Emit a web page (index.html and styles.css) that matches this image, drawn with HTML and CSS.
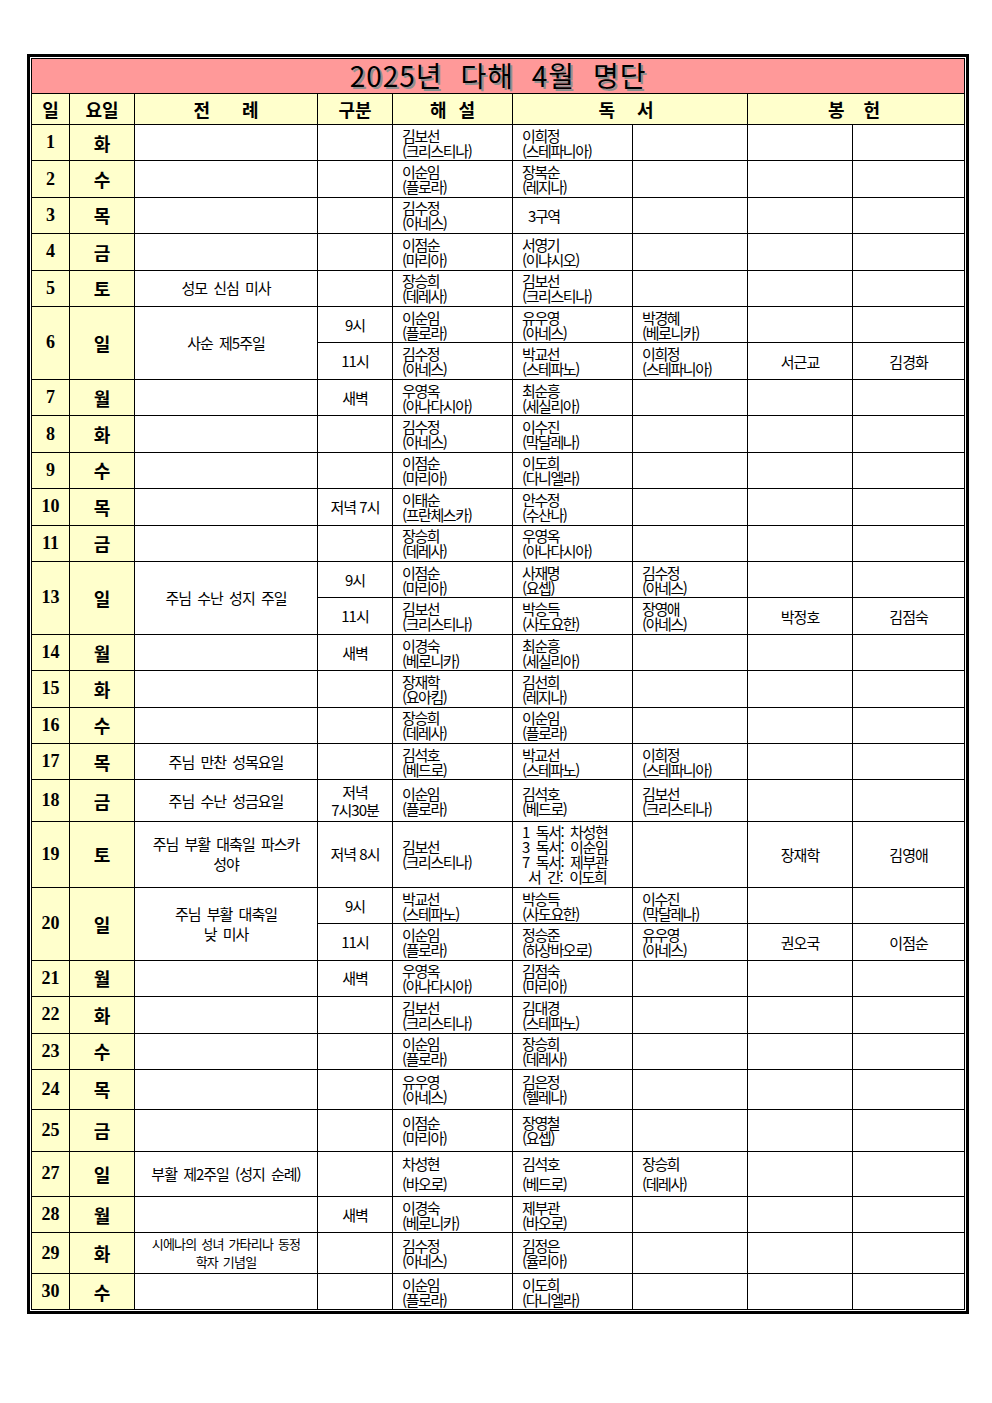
FILE: index.html
```html
<!DOCTYPE html>
<html lang="ko">
<head>
<meta charset="utf-8">
<title>2025년 다해 4월 명단</title>
<link rel="stylesheet" href="styles.css">
</head>
<body>
<div class="frame">
<table class="roster">
<colgroup>
<col class="c-date"><col class="c-day"><col class="c-lit"><col class="c-kind"><col class="c-nm"><col class="c-nm"><col class="c-nm2"><col class="c-g1"><col class="c-g2">
</colgroup>
<thead>
<tr class="title-row"><th colspan="9" class="title">2025년 다해 4월 명단</th></tr>
<tr class="head-row">
<th class="hd">일</th><th class="hd">요일</th><th class="hd"><span class="sp-lit">전례</span></th><th class="hd">구분</th><th class="hd"><span class="sp-cm">해설</span></th><th class="hd" colspan="2"><span class="sp-rd">독서</span></th><th class="hd" colspan="2"><span class="sp-gf">봉헌</span></th>
</tr>
</thead>
<tbody>
<tr class="row"><td class="date">1</td><td class="day">화</td><td class="lit"></td><td class="kind"></td><td class="nm">김보선<br>(크리스티나)</td><td class="nm">이희정<br>(스테파니아)</td><td class="nm"></td><td class="gift"></td><td class="gift"></td></tr>
<tr class="row"><td class="date">2</td><td class="day">수</td><td class="lit"></td><td class="kind"></td><td class="nm">이순임<br>(플로라)</td><td class="nm">장복순<br>(레지나)</td><td class="nm"></td><td class="gift"></td><td class="gift"></td></tr>
<tr class="row"><td class="date">3</td><td class="day">목</td><td class="lit"></td><td class="kind"></td><td class="nm">김수정<br>(아네스)</td><td class="nm"><span class="indent">3구역</span></td><td class="nm"></td><td class="gift"></td><td class="gift"></td></tr>
<tr class="row"><td class="date">4</td><td class="day">금</td><td class="lit"></td><td class="kind"></td><td class="nm">이점순<br>(마리아)</td><td class="nm">서영기<br>(이냐시오)</td><td class="nm"></td><td class="gift"></td><td class="gift"></td></tr>
<tr class="row"><td class="date">5</td><td class="day">토</td><td class="lit">성모 신심 미사</td><td class="kind"></td><td class="nm">장승희<br>(데레사)</td><td class="nm">김보선<br>(크리스티나)</td><td class="nm"></td><td class="gift"></td><td class="gift"></td></tr>
<tr class="sub"><td class="date" rowspan="2">6</td><td class="day" rowspan="2">일</td><td class="lit" rowspan="2">사순 제5주일</td><td class="kind">9시</td><td class="nm">이순임<br>(플로라)</td><td class="nm">유우영<br>(아네스)</td><td class="nm">박경혜<br>(베로니카)</td><td class="gift"></td><td class="gift"></td></tr>
<tr class="sub"><td class="kind">11시</td><td class="nm">김수정<br>(아네스)</td><td class="nm">박교선<br>(스테파노)</td><td class="nm">이희정<br>(스테파니아)</td><td class="gift">서근교</td><td class="gift">김경화</td></tr>
<tr class="row"><td class="date">7</td><td class="day">월</td><td class="lit"></td><td class="kind">새벽</td><td class="nm">우영옥<br>(아나다시아)</td><td class="nm">최순흥<br>(세실리아)</td><td class="nm"></td><td class="gift"></td><td class="gift"></td></tr>
<tr class="row"><td class="date">8</td><td class="day">화</td><td class="lit"></td><td class="kind"></td><td class="nm">김수정<br>(아네스)</td><td class="nm">이수진<br>(막달레나)</td><td class="nm"></td><td class="gift"></td><td class="gift"></td></tr>
<tr class="row"><td class="date">9</td><td class="day">수</td><td class="lit"></td><td class="kind"></td><td class="nm">이점순<br>(마리아)</td><td class="nm">이도희<br>(다니엘라)</td><td class="nm"></td><td class="gift"></td><td class="gift"></td></tr>
<tr class="row"><td class="date">10</td><td class="day">목</td><td class="lit"></td><td class="kind">저녁 7시</td><td class="nm">이태순<br>(프란체스카)</td><td class="nm">안수정<br>(수산나)</td><td class="nm"></td><td class="gift"></td><td class="gift"></td></tr>
<tr class="row"><td class="date">11</td><td class="day">금</td><td class="lit"></td><td class="kind"></td><td class="nm">장승희<br>(데레사)</td><td class="nm">우영옥<br>(아나다시아)</td><td class="nm"></td><td class="gift"></td><td class="gift"></td></tr>
<tr class="sub"><td class="date" rowspan="2">13</td><td class="day" rowspan="2">일</td><td class="lit" rowspan="2">주님 수난 성지 주일</td><td class="kind">9시</td><td class="nm">이점순<br>(마리아)</td><td class="nm">사재명<br>(요셉)</td><td class="nm">김수정<br>(아네스)</td><td class="gift"></td><td class="gift"></td></tr>
<tr class="sub"><td class="kind">11시</td><td class="nm">김보선<br>(크리스티나)</td><td class="nm">박승득<br>(사도요한)</td><td class="nm">장영애<br>(아네스)</td><td class="gift">박정호</td><td class="gift">김점숙</td></tr>
<tr class="row"><td class="date">14</td><td class="day">월</td><td class="lit"></td><td class="kind">새벽</td><td class="nm">이경숙<br>(베로니카)</td><td class="nm">최순흥<br>(세실리아)</td><td class="nm"></td><td class="gift"></td><td class="gift"></td></tr>
<tr class="row"><td class="date">15</td><td class="day">화</td><td class="lit"></td><td class="kind"></td><td class="nm">장재학<br>(요아킴)</td><td class="nm">김선희<br>(레지나)</td><td class="nm"></td><td class="gift"></td><td class="gift"></td></tr>
<tr class="row"><td class="date">16</td><td class="day">수</td><td class="lit"></td><td class="kind"></td><td class="nm">장승희<br>(데레사)</td><td class="nm">이순임<br>(플로라)</td><td class="nm"></td><td class="gift"></td><td class="gift"></td></tr>
<tr class="row"><td class="date">17</td><td class="day">목</td><td class="lit">주님 만찬 성목요일</td><td class="kind"></td><td class="nm">김석호<br>(베드로)</td><td class="nm">박교선<br>(스테파노)</td><td class="nm">이희정<br>(스테파니아)</td><td class="gift"></td><td class="gift"></td></tr>
<tr class="h42"><td class="date">18</td><td class="day">금</td><td class="lit">주님 수난 성금요일</td><td class="kind">저녁<br>7시30분</td><td class="nm">이순임<br>(플로라)</td><td class="nm">김석호<br>(베드로)</td><td class="nm">김보선<br>(크리스티나)</td><td class="gift"></td><td class="gift"></td></tr>
<tr class="h66"><td class="date">19</td><td class="day">토</td><td class="lit">주님 부활 대축일 파스카<br>성야</td><td class="kind">저녁 8시</td><td class="nm">김보선<br>(크리스티나)</td><td class="nm spaced">1 독서: 차성현<br>3 독서: 이순임<br>7 독서: 제부관<br><span class="indent">서 간: 이도희</span></td><td class="nm"></td><td class="gift">장재학</td><td class="gift">김영애</td></tr>
<tr class="sub"><td class="date" rowspan="2">20</td><td class="day" rowspan="2">일</td><td class="lit" rowspan="2">주님 부활 대축일<br>낮 미사</td><td class="kind">9시</td><td class="nm">박교선<br>(스테파노)</td><td class="nm">박승득<br>(사도요한)</td><td class="nm">이수진<br>(막달레나)</td><td class="gift"></td><td class="gift"></td></tr>
<tr class="sub"><td class="kind">11시</td><td class="nm">이순임<br>(플로라)</td><td class="nm">정승준<br>(하상바오로)</td><td class="nm">유우영<br>(아네스)</td><td class="gift">권오국</td><td class="gift">이점순</td></tr>
<tr class="row"><td class="date">21</td><td class="day">월</td><td class="lit"></td><td class="kind">새벽</td><td class="nm">우영옥<br>(아나다시아)</td><td class="nm">김점숙<br>(마리아)</td><td class="nm"></td><td class="gift"></td><td class="gift"></td></tr>
<tr class="row"><td class="date">22</td><td class="day">화</td><td class="lit"></td><td class="kind"></td><td class="nm">김보선<br>(크리스티나)</td><td class="nm">김대경<br>(스테파노)</td><td class="nm"></td><td class="gift"></td><td class="gift"></td></tr>
<tr class="row"><td class="date">23</td><td class="day">수</td><td class="lit"></td><td class="kind"></td><td class="nm">이순임<br>(플로라)</td><td class="nm">장승희<br>(데레사)</td><td class="nm"></td><td class="gift"></td><td class="gift"></td></tr>
<tr class="h40"><td class="date">24</td><td class="day">목</td><td class="lit"></td><td class="kind"></td><td class="nm">유우영<br>(아네스)</td><td class="nm">김은정<br>(헬레나)</td><td class="nm"></td><td class="gift"></td><td class="gift"></td></tr>
<tr class="h42"><td class="date">25</td><td class="day">금</td><td class="lit"></td><td class="kind"></td><td class="nm">이점순<br>(마리아)</td><td class="nm">장영철<br>(요셉)</td><td class="nm"></td><td class="gift"></td><td class="gift"></td></tr>
<tr class="h46"><td class="date">27</td><td class="day">일</td><td class="lit">부활 제2주일 (성지 순례)</td><td class="kind"></td><td class="nm wide">차성현<br>(바오로)</td><td class="nm wide">김석호<br>(베드로)</td><td class="nm wide">장승희<br>(데레사)</td><td class="gift"></td><td class="gift"></td></tr>
<tr class="h36"><td class="date">28</td><td class="day">월</td><td class="lit"></td><td class="kind">새벽</td><td class="nm">이경숙<br>(베로니카)</td><td class="nm">제부관<br>(바오로)</td><td class="nm"></td><td class="gift"></td><td class="gift"></td></tr>
<tr class="h41"><td class="date">29</td><td class="day">화</td><td class="lit small">시에나의 성녀 가타리나 동정<br>학자 기념일</td><td class="kind"></td><td class="nm">김수정<br>(아네스)</td><td class="nm">김정은<br>(율리아)</td><td class="nm"></td><td class="gift"></td><td class="gift"></td></tr>
<tr class="h36"><td class="date">30</td><td class="day">수</td><td class="lit"></td><td class="kind"></td><td class="nm">이순임<br>(플로라)</td><td class="nm">이도희<br>(다니엘라)</td><td class="nm"></td><td class="gift"></td><td class="gift"></td></tr>
</tbody>
</table>
</div>
</body>
</html>
```

FILE: styles.css
```css
html, body {
  margin: 0;
  padding: 0;
  background: #fff;
}

.frame {
  display: inline-block;
  vertical-align: top;
  margin: 54px 0 0 27px;
  border: 3px solid #000;
  padding: 1px;
}

.roster {
  border-collapse: collapse;
  table-layout: fixed;
  width: 933px;
  border: 1px solid #000;
  font-family: "Noto Sans CJK KR", sans-serif;
  color: #000;
}

.roster th,
.roster td {
  border: 1px solid #000;
  padding: 0;
  vertical-align: middle;
  overflow: hidden;
}

.c-date { width: 38px; }
.c-day { width: 65px; }
.c-lit { width: 183px; }
.c-kind { width: 75px; }
.c-nm { width: 120px; }
.c-nm2 { width: 115px; }
.c-g1 { width: 105px; }
.c-g2 { width: 112px; }

/* title */
.title-row { height: 35px; }
.roster .title {
  background: #ff9999;
  font-size: 28px;
  font-weight: 400;
  letter-spacing: 1px;
  word-spacing: 9px;
  line-height: 30px;
  padding-bottom: 3px;
  text-align: center;
  text-shadow: 2px 2px 0 #8f8f8f;
  overflow: visible;
}

/* header */
.head-row { height: 31px; }
.roster .hd {
  background: #ffffcc;
  font-size: 18px;
  font-weight: 700;
  line-height: 26px;
  text-align: center;
}
.sp-lit { letter-spacing: 32px; padding-left: 32px; }
.sp-cm { letter-spacing: 12px; padding-left: 12px; }
.sp-rd { letter-spacing: 22px; padding-left: 14px; }
.sp-gf { letter-spacing: 19px; padding-left: 15px; }

/* rows */
.row { height: 36.4px; }
.sub { height: 36.5px; }
.h36 { height: 36px; }
.h40 { height: 40px; }
.h41 { height: 41px; }
.h42 { height: 41.7px; }
.h46 { height: 45.6px; }
.h66 { height: 65.6px; }

.roster .date {
  background: #ffffcc;
  font-family: "Liberation Serif", serif;
  font-weight: 700;
  font-size: 18px;
  text-align: center;
}

.roster .day {
  background: #ffffcc;
  font-size: 18px;
  font-weight: 700;
  text-align: center;
}

.roster .lit {
  font-size: 15px;
  letter-spacing: -1px;
  word-spacing: 3px;
  line-height: 20px;
  text-align: center;
}
.roster .lit.small {
  font-size: 13px;
  letter-spacing: -0.8px;
  word-spacing: 2px;
  line-height: 18px;
}

.roster .kind {
  font-size: 15px;
  letter-spacing: -1px;
  text-align: center;
  line-height: 18px;
}

.roster .nm {
  font-size: 15px;
  letter-spacing: -1.4px;
  line-height: 15px;
  padding-left: 9px;
  text-align: left;
  white-space: nowrap;
}
.roster .nm.wide { line-height: 20px; }
.roster .nm.spaced { word-spacing: 4px; }

.roster .gift {
  font-size: 15px;
  letter-spacing: -1px;
  text-align: center;
}

.indent { padding-left: 6px; }
```
